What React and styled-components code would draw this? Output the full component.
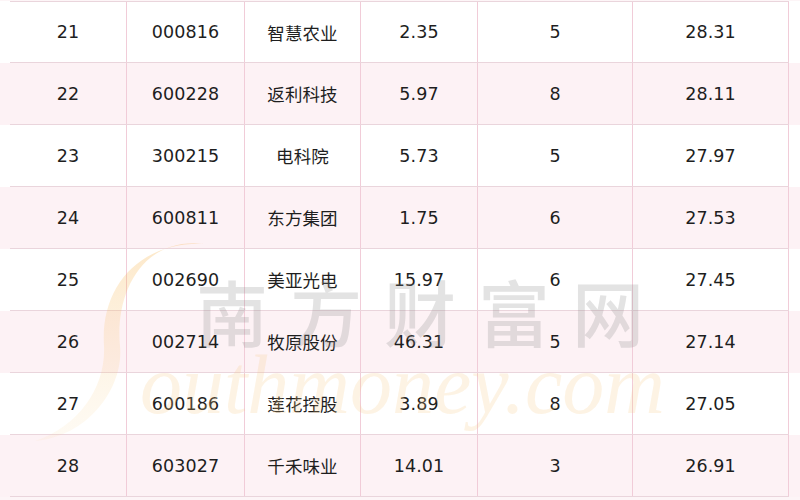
import React from "react";
import styled, { createGlobalStyle } from "styled-components";

const GlobalStyle = createGlobalStyle`
  html, body {
    margin: 0;
    padding: 0;
    background: #fdf5f7;
  }
`;

const Page = styled.div`
  position: relative;
  width: 800px;
  height: 500px;
  overflow: hidden;
  padding-top: 1px;
  box-sizing: border-box;
  font-family: "DejaVu Sans", "Noto Sans CJK SC", sans-serif;
  color: #1e1e1e;
`;

const Row = styled.div`
  background: ${(p) => (p.$alt ? "#fdf2f5" : "#ffffff")};
  padding: 0 11px 0 10px;
`;

const Cells = styled.div`
  display: grid;
  grid-template-columns: 117px 118px 116px 117px 155px 156px;
  height: 62px;
  box-sizing: border-box;
  border-bottom: 1px solid #ead5dc;
  border-top: ${(p) => (p.$first ? "1px solid #ead5dc" : "none")};
`;

const Cell = styled.div`
  display: flex;
  align-items: center;
  justify-content: center;
  border-right: 1px solid #f1ccd8;
  font-size: 17.5px;
  letter-spacing: 0.1px;
`;

/* watermark lies over the table */
const Watermark = styled.div`
  position: absolute;
  inset: 0;
  pointer-events: none;
  display: flex;
  flex-direction: column;
  padding: 270px 0 0 140px;
  box-sizing: border-box;
`;

const WatermarkCn = styled.div`
  margin-left: 56px;
  font-family: "Noto Sans CJK SC", sans-serif;
  font-weight: 500;
  font-size: 72px;
  line-height: 80px;
  letter-spacing: 22px;
  color: rgba(140, 140, 140, 0.24);
  white-space: nowrap;
`;

const WatermarkEn = styled.div`
  margin-top: -10px;
  font-family: "Liberation Serif", serif;
  font-style: italic;
  font-size: 84px;
  line-height: 90px;
  color: rgba(244, 200, 130, 0.22);
  white-space: nowrap;
`;

const Swoosh = styled.svg`
  position: absolute;
  left: 20px;
  top: 236px;
`;

const rows = [
  ["21", "000816", "智慧农业", "2.35", "5", "28.31"],
  ["22", "600228", "返利科技", "5.97", "8", "28.11"],
  ["23", "300215", "电科院", "5.73", "5", "27.97"],
  ["24", "600811", "东方集团", "1.75", "6", "27.53"],
  ["25", "002690", "美亚光电", "15.97", "6", "27.45"],
  ["26", "002714", "牧原股份", "46.31", "5", "27.14"],
  ["27", "600186", "莲花控股", "3.89", "8", "27.05"],
  ["28", "603027", "千禾味业", "14.01", "3", "26.91"],
];

const App = () => {
  return (
    <>
      <GlobalStyle />
      <Page>
        {rows.map((r, i) => (
          <Row key={r[0]} $alt={i % 2 === 1}>
            <Cells $first={i === 0}>
              {r.map((v, j) => (
                <Cell key={j}>{v}</Cell>
              ))}
            </Cells>
          </Row>
        ))}
        <Watermark>
          <Swoosh width="200" height="220" viewBox="0 0 200 220">
            <defs>
              <linearGradient id="sw" x1="0" y1="0" x2="0" y2="1">
                <stop offset="0" stopColor="#f7b24a" stopOpacity="0.3" />
                <stop offset="1" stopColor="#f9d9a0" stopOpacity="0.12" />
              </linearGradient>
            </defs>
            <path
              d="M185 8 C 120 0, 95 60, 100 110 C 104 150, 70 200, 15 205 C 60 190, 86 150, 84 110 C 80 50, 120 5, 185 8 Z"
              fill="url(#sw)"
            />
          </Swoosh>
          <WatermarkCn>南方财富网</WatermarkCn>
          <WatermarkEn>outhmoney.com</WatermarkEn>
        </Watermark>
      </Page>
    </>
  );
};

export default App;
